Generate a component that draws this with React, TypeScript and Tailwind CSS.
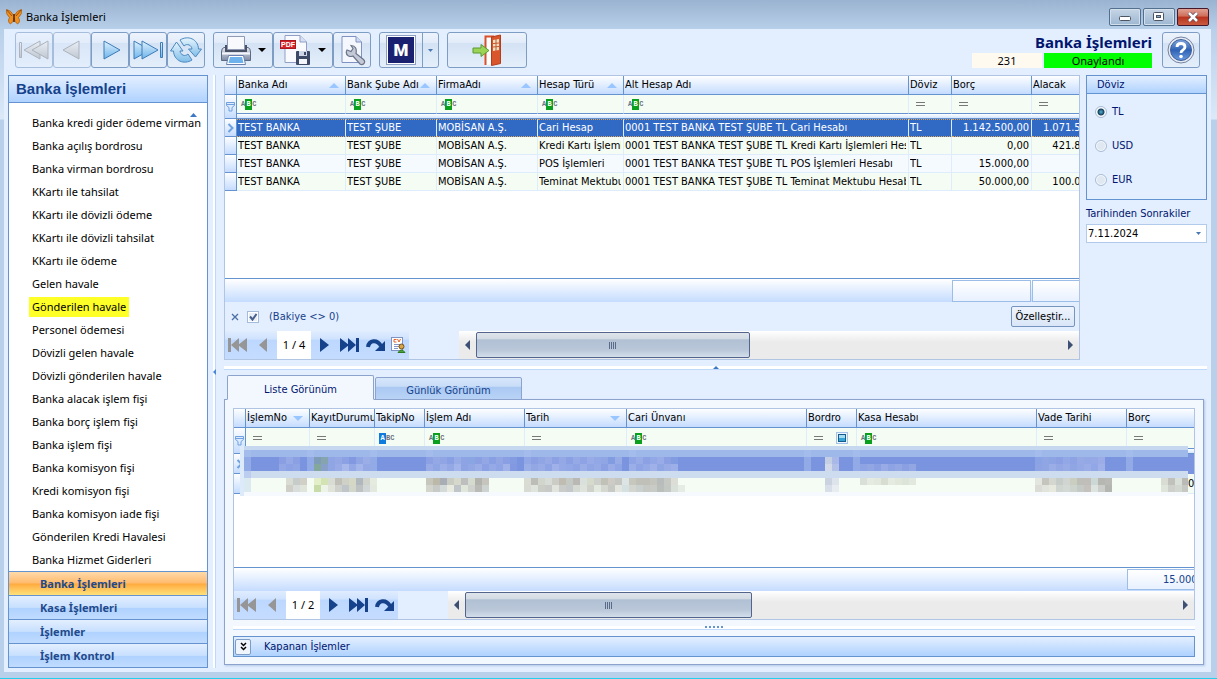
import React, { useState } from 'react';

type Align = 'left' | 'right';
type FilterKind = 'abc' | 'starts' | 'eq' | 'eqbox';

interface Column {
  title: string;
  width: string;
  filter: FilterKind;
  sort?: 'asc' | 'desc';
  align?: Align;
}

const menuItems = [
  'Banka kredi gider ödeme virman',
  'Banka açılış bordrosu',
  'Banka virman bordrosu',
  'KKartı ile tahsilat',
  'KKartı ile dövizli ödeme',
  'KKartı ile dövizli tahsilat',
  'KKartı ile ödeme',
  'Gelen havale',
  'Gönderilen havale',
  'Personel ödemesi',
  'Dövizli gelen havale',
  'Dövizli gönderilen havale',
  'Banka alacak işlem fişi',
  'Banka borç işlem fişi',
  'Banka işlem fişi',
  'Banka komisyon fişi',
  'Kredi komisyon fişi',
  'Banka komisyon iade fişi',
  'Gönderilen Kredi Havalesi',
  'Banka Hizmet Giderleri',
];

const menuGroups = ['Banka İşlemleri', 'Kasa İşlemleri', 'İşlemler', 'İşlem Kontrol'];

const accountColumns: Column[] = [
  { title: 'Banka Adı', width: 'w-[109px]', filter: 'abc', sort: 'asc' },
  { title: 'Bank Şube Adı', width: 'w-[91px]', filter: 'abc', sort: 'asc' },
  { title: 'FirmaAdı', width: 'w-[101px]', filter: 'abc', sort: 'asc' },
  { title: 'Hesap Türü', width: 'w-[86px]', filter: 'abc', sort: 'asc' },
  { title: 'Alt Hesap Adı', width: 'w-[285px]', filter: 'abc' },
  { title: 'Döviz', width: 'w-[43px]', filter: 'eq' },
  { title: 'Borç', width: 'w-[80px]', filter: 'eq', align: 'right' },
  { title: 'Alacak', width: 'w-[80px]', filter: 'eq', align: 'right' },
];

const accountRows = [
  ['TEST BANKA', 'TEST ŞUBE', 'MOBİSAN A.Ş.', 'Cari Hesap', '0001 TEST BANKA TEST ŞUBE TL Cari Hesabı', 'TL', '1.142.500,00', '1.071.500,00'],
  ['TEST BANKA', 'TEST ŞUBE', 'MOBİSAN A.Ş.', 'Kredi Kartı İşlemleri', '0001 TEST BANKA TEST ŞUBE TL Kredi Kartı İşlemleri Hesabı', 'TL', '0,00', '421.800,00'],
  ['TEST BANKA', 'TEST ŞUBE', 'MOBİSAN A.Ş.', 'POS İşlemleri', '0001 TEST BANKA TEST ŞUBE TL POS İşlemleri Hesabı', 'TL', '15.000,00', ''],
  ['TEST BANKA', 'TEST ŞUBE', 'MOBİSAN A.Ş.', 'Teminat Mektubu', '0001 TEST BANKA TEST ŞUBE TL Teminat Mektubu Hesabı', 'TL', '50.000,00', '100.000,00'],
];

const entryColumns: Column[] = [
  { title: 'İşlemNo', width: 'w-[64px]', filter: 'eq', sort: 'desc' },
  { title: 'KayıtDurumu', width: 'w-[65px]', filter: 'eq' },
  { title: 'TakipNo', width: 'w-[50px]', filter: 'starts' },
  { title: 'İşlem Adı', width: 'w-[100px]', filter: 'abc' },
  { title: 'Tarih', width: 'w-[102px]', filter: 'eq', sort: 'desc' },
  { title: 'Cari Ünvanı', width: 'w-[180px]', filter: 'abc' },
  { title: 'Bordro', width: 'w-[50px]', filter: 'eqbox' },
  { title: 'Kasa Hesabı', width: 'w-[180px]', filter: 'abc' },
  { title: 'Vade Tarihi', width: 'w-[90px]', filter: 'eq' },
  { title: 'Borç', width: 'w-[86px]', filter: 'eq', align: 'right' },
];

const entryRows = [
  ['', '', '', '', '', '', '', '', '', ''],
  ['', '', '', '', '', '', '', '', '', '15.000,00'],
];

// Masked tiles of the two entry rows: start tile, then the colours of each line
const maskDark = [
  { at: 5, top: '8a9fe2 95a9e6 8ba0e3', bottom: '93a7e5 8da2e4 90a5e4' },
  { at: 10, top: '7e9bb8 86a4ae 90a6e4 94a8e5 8ba1e3 8298e1 8fa5e4 9bade7', bottom: '83a79b 88a0c8 8fa5e4 98abe6 a8b8eb 94a8e5 a4b5ea 94a8e5' },
  { at: 26, top: '8ca1e3 94a8e5 90a5e4 899fe3 97abe6 8ea3e4 89a6e2 8aa0e3 93a7e5 88a0e3 92a6e4 8a9fe3 829be1', bottom: '98abe6 90a5e4 9cafe8 94a8e5 a3b4ea 8ea3e4 93a7e5 9badE7 8ca1e3 95a9e6 8fa4e4 a1b2e9 8298e1' },
  { at: 40, top: '92a7e5 8ba0e3 90a5e4 97aae6 8ca1e3 93a8e5 8aa0e3 95a9e6 8ea3e4 98abe6 92a7e5 90a5e4 829ce1 97abe6', bottom: '9aaee7 93a7e5 98abe6 8ea3e4 9fb1e8 95a9e6 92a7e5 8ea3e4 9badE7 90a5e4 95a9e6 8ba0e3 99ace7 8fa4e4' },
  { at: 55, top: '8fa4e4 97abe6 8ca1e3 92a7e5 99ace7 8aa0e3 829ce1', bottom: '9aaee7 8fa4e4 95a9e6 9fb1e8 90a5e4 98abe6 9cafe8' },
  { at: 83, top: 'c4cfe4 a9b8e6', bottom: 'd2dae9 b3c0e8' },
  { at: 88, top: '7a94df 7a94df 7a94df 7a94df 7a94df 7a94df 7a94df 7a94df', bottom: '8da3e3 92a6e4 8ba0e3 98abe6 8ea3e4 93a7e5 8ba0e3 92a6e4' },
  { at: 113, top: '8aa3e4 90a5e4 8ca4e4 8aa0e3 92a7e5 8ea3e4 97aae6 93a8e5 95a9e6 9bace6', bottom: '8ea3e4 8fa5e4 9aade7 93a7e5 98abe6 90a5e4 95a9e6 9badE7 92a7e5 9fb1e8' },
];

const maskLight = [
  { at: 6, top: 'd9dcd2 c5ccc9 d0d0c6', bottom: 'cfcfc7 d9dddb e0e5dc' },
  { at: 10, top: 'e2efc9 d4e3b4 d9dcd2 c0bfb8 cfd0c6 d5d8c4 b0b8bd cfd3cb e6ebe0', bottom: 'c8dcaa edf3e6 dfe3da cfd2cc bfc5c8 d3d7c9 bfc2c2 d1d6d6 e4e9df' },
  { at: 26, top: 'c7c6bd bdb9a8 a9adb5 c8ccc3 d5d8cb bcbfbd d5dbcf b3b3ad c5c5bd', bottom: 'd3d5cd c7cac7 d3dad7 e9ebe0 bfc5c8 e0e6da cfd2cd babbb7 ccd3d1' },
  { at: 40, top: 'd8dcd3 bdbdb8 d2d5cc d7dcd6 ccccc6 c1bcb2 c5c9c4 b9b8b4 dae1dc d5dacb cdd0ca c2c1b8 cdcbc4 c4c7c1 dce5e4', bottom: 'd7dbd3 dfe4dd cbcec7 c7cac7 e0e4dc c9ccc8 c4c8c8 d5dad3 dee4dc cfd2cb e4e9df d4d8d1 c7cac4 e3e6df d5e0e1' },
  { at: 55, top: 'c6c7bd c0c0b8 c1c0b8 c4c6bd b8bdbc c6c9c3 dcded6', bottom: 'd2d6cf cad0cd c6c9c4 c9ccc6 bbbfbc c4c8c4 d9dfd9 e5ece3' },
  { at: 83, top: 'cbd2e0 dde4ec', bottom: 'd9dfe9 e7edf1' },
  { at: 88, top: 'd8e0d8 e6ebe2 e3e8de d8ddd1 e6ebe2 e1e7db dce3d9 e3e8de', bottom: 'f5fcf3 f5fcf3 f5fcf3 f5fcf3 f5fcf3 f5fcf3 f5fcf3 f5fcf3' },
  { at: 113, top: 'e3e6df c5c5be d3d7d0 c6ccc8 d1d5d1 c9cec1 bfbfba c1bdb8 cbd8d6 b7b7b2 b9bab5', bottom: 'dadcd5 e0e4dc e7e8de cfd5d1 d3d9d5 cdd4ce c6cac7 c5c2be dde4e0 cbceca b4b6b1' },
  { at: 131, top: 'd9dcd2 c1c1bb d9dfd9 b9b9b6', bottom: 'e0e5dc cdd0cb d2d7d0 c6c8c3' },
];

// Column separators seen through the mask
const maskLines = [9, 18, 26, 40, 55, 80, 87, 113, 126];

const SortMark: React.FC<{ dir: 'asc' | 'desc' }> = ({ dir }) => (
  <svg viewBox="0 0 10 5" className="mr-[6px] h-[5px] w-[10px] shrink-0">
    <path d={dir === 'asc' ? 'M5 0L10 5H0Z' : 'M0 0H10L5 5Z'} fill="#99c6ff" />
  </svg>
);

const FilterIcon: React.FC<{ kind: FilterKind }> = ({ kind }) => {
  if (kind === 'abc') {
    return (
      <span className="flex h-[11px] w-4 items-center text-[7px] leading-none font-bold text-gray-500 font-['Liberation_Mono',monospace]">
        <span>A</span>
        <span className="flex h-[11px] w-[7px] items-center justify-center bg-[#0aa01e] text-white">B</span>
        <span>C</span>
      </span>
    );
  }
  if (kind === 'starts') {
    return (
      <span className="flex h-[11px] w-4 items-center text-[7px] leading-none font-bold text-gray-500 font-['Liberation_Mono',monospace]">
        <span className="flex h-[11px] w-[7px] items-center justify-center bg-[#0f7bdc] text-white">A</span>
        <span>BC</span>
      </span>
    );
  }
  return (
    <span className="flex w-full items-center justify-between pl-[3px]">
      <svg viewBox="0 0 9 4" className="h-1 w-[9px]">
        <path d="M0 .5H9M0 3.5H9" stroke="#787878" />
      </svg>
      {kind === 'eqbox' && (
        <svg viewBox="0 0 12 12" className="mr-2 h-3 w-3">
          <rect x=".5" y=".5" width="11" height="11" fill="#eef5ff" stroke="#a5c3ea" />
          <rect x="2.500" y="2.500" width="7" height="7" fill="#35a5d6" stroke="#175d8c" />
          <rect x="3" y="3" width="6" height="3" fill="#a5dcf2" />
        </svg>
      )}
    </span>
  );
};

const headCell = 'border-r border-b border-[#6593cf] bg-linear-to-b from-[#fdfeff] to-[#c5dcff]';

interface GridProps {
  label: string;
  columns: Column[];
  rows: string[][];
  tableWidth: string;
  filterHeight: string;
  rowHeight: string;
  selectedRow: string;
  selectedCell: string;
}

const DataGrid: React.FC<GridProps> = ({
  label,
  columns,
  rows,
  tableWidth,
  filterHeight,
  rowHeight,
  selectedRow,
  selectedCell,
}) => (
  <table aria-label={label} className={`${tableWidth} table-fixed border-separate border-spacing-0 leading-[14px] whitespace-nowrap`}>
    <colgroup>
      <col className="w-3" />
      {columns.map((c) => (
        <col key={c.title} className={c.width} />
      ))}
    </colgroup>
    <thead>
      <tr className="h-[19px]">
        <th className={`${headCell} p-0`} />
        {columns.map((c) => (
          <th key={c.title} className={`${headCell} p-0 pl-px text-left font-normal`}>
            <span className="flex items-center justify-between overflow-hidden">
              {c.title}
              {c.sort && <SortMark dir={c.sort} />}
            </span>
          </th>
        ))}
      </tr>
    </thead>
    <tbody>
      <tr className={filterHeight}>
        <td rowSpan={2} className={`${headCell} p-0`}>
          <svg viewBox="0 0 9 11" className="ml-px h-[11px] w-[9px]">
            <path d="M.5 1.500H8.500V4.500L6 6.500V10H3V6.500L.5 4.500ZM1 3.500H8" fill="#dcebff" stroke="#6fa0df" />
          </svg>
        </td>
        {columns.map((c) => (
          <td key={c.title} className="border-r border-b border-r-[#dfecfb] border-b-[#6593cf] bg-[#f5fcf3] p-0 pl-1">
            <FilterIcon kind={c.filter} />
          </td>
        ))}
      </tr>
      <tr className="h-[5px]">
        <td colSpan={columns.length} className="border-b border-[#6593cf] bg-linear-to-b from-[#fdfeff] to-[#d5e6ff] p-0" />
      </tr>
      {rows.map((row, r) => (
        <tr key={r} className={`${rowHeight} ${r === 0 ? selectedRow : r % 2 ? 'bg-[#f5fcf3]' : 'bg-[#f5faff]'}`}>
          <td className={`${headCell} p-0`}>
            {r === 0 && (
              <svg viewBox="0 0 8 10" className="ml-[2px] h-[10px] w-2">
                <path d="M1.500 1L5.500 5L1.500 9" fill="none" stroke="#6fa0df" strokeWidth="2" />
              </svg>
            )}
          </td>
          {row.map((text, c) => (
            <td key={c} className={`border-r p-0 pr-[2px] pl-px ${r === 0 ? selectedCell : 'border-b border-[#dfecfb] pt-px'}`}>
              <div className={`overflow-hidden ${columns[c].align === 'right' ? 'text-right' : ''}`}>{text}</div>
            </td>
          ))}
        </tr>
      ))}
    </tbody>
  </table>
);

const RowMask: React.FC = () => (
  <div className="absolute top-[37px] right-[6px] left-[6px] h-[50px] overflow-hidden">
    <svg className="block h-full w-full" shapeRendering="crispEdges">
      <rect width="100%" height="4" fill="#c6d8f0" />
      <rect y="4" width="100%" height="7" fill="#9fb8ea" />
      <rect y="11" width="100%" height="14" fill="#7a94df" />
      <rect y="25" width="100%" height="7" fill="#cedcf0" />
      <rect y="32" width="100%" height="14" fill="#f5fcf3" />
      <rect y="46" width="100%" height="4" fill="#f6fafe" />
      <rect y="0" width="4" height="50" fill="#dceafa" />
      <rect x="4" y="4" width="7" height="28" fill="#a9c0ee" opacity=".5" />
      <rect x="4" y="32" width="7" height="14" fill="#dbe9f0" />
      {maskLines.map((i) => (
        <rect key={i} x={4 + i * 7} y="4" width="7" height="21" fill="#a9c0ee" opacity=".5" />
      ))}
      {[{ tiles: maskDark, y: 11 }, { tiles: maskLight, y: 32 }].map(({ tiles, y }) =>
        tiles.map(({ at, top, bottom }) =>
          [top, bottom].map((line, l) =>
            line.split(' ').map((color, i) => (
              <rect key={`${y}-${at}-${l}-${i}`} x={4 + (at + i) * 7} y={y + l * 7} width="7" height="7" fill={`#${color}`} />
            )),
          ),
        ),
      )}
    </svg>
  </div>
);

const NavButton: React.FC<{ label: string; d: string; color: string }> = ({ label, d, color }) => (
  <button aria-label={label} className="flex h-full w-[26px] items-center justify-center">
    <svg viewBox="0 0 20 14" className="h-[14px] w-5">
      <path d={d} fill={color} />
    </svg>
  </button>
);

const FIRST = 'M0 0H3V14H0ZM11 0V14L3 7ZM19 0V14L10 7Z';
const LAST = 'M16 0H19V14H16ZM8 0V14L16 7ZM0 0V14L9 7Z';

interface NavigatorProps {
  page: string;
  before: string;
  thumb: string;
  withReport?: boolean;
}

const Navigator: React.FC<NavigatorProps> = ({ page, before, thumb, withReport }) => (
  <div className="flex h-7 shrink-0">
    <div className="flex bg-[linear-gradient(to_bottom,#e0ecff_0,#cfe2ff_30%,#bcd7ff_31%,#c5dcff_100%)]">
      <NavButton label="İlk" color="#969696" d={FIRST} />
      <NavButton label="Önceki" color="#969696" d="M13 0V14L5 7Z" />
      <span className="flex w-[34px] items-center justify-center bg-white font-['Noto_Sans',sans-serif]">{page}</span>
      <NavButton label="Sonraki" color="#15428b" d="M6 0V14L15 7Z" />
      <NavButton label="Son" color="#15428b" d={LAST} />
      <button aria-label="Yenile" className="flex w-[26px] items-center justify-center">
        <svg viewBox="0 0 20 14" className="h-[14px] w-5">
          <path d="M2 9C3 2 11 1 15 8" fill="none" stroke="#15428b" strokeWidth="4" />
          <path d="M19 3V13H9Z" fill="#15428b" />
        </svg>
      </button>
      {withReport && (
        <button aria-label="Rapor" className="flex w-5 items-center justify-start pl-[2px]">
          <svg viewBox="0 0 15 16" className="h-4 w-[15px]">
            <rect x=".5" y=".5" width="11" height="13" fill="#fff" stroke="#7c93c4" />
            <path d="M5.500 2.500H3V5H5.500M6.500 2L8 5L9.500 2" stroke="#e2622c" fill="none" />
            <path d="M3 7.500H9M3 9.500H8M3 11.500H7" stroke="#8496c8" />
            <circle cx="10.500" cy="9.500" r="2.500" fill="#d5a54a" stroke="#7a5118" />
            <path d="M7 15.500Q10.500 10.500 14 15.500Z" fill="#4aa53c" stroke="#2c7a22" />
          </svg>
        </button>
      )}
    </div>
    <div className={`${before} flex min-w-0 flex-1 items-center bg-linear-to-b from-white to-[#ebebeb] to-40%`}>
      <button aria-label="Sola kaydır" className="flex w-[17px] shrink-0 justify-center">
        <svg viewBox="0 0 5 10" className="h-[10px] w-[5px]">
          <path d="M5 0V10L0 5Z" fill="#3d4f73" />
        </svg>
      </button>
      <div
        className={`${thumb} flex h-[26px] items-center justify-center rounded-[2px] border border-[#53658c] bg-[linear-gradient(to_bottom,#dfe5eb_0,#d2dae3_25%,#b1c0d3_28%,#b9c7d9_70%,#d3deea_100%)]`}
      >
        <svg viewBox="0 0 8 7" className="h-[7px] w-2">
          <path d="M.5 0V7M2.500 0V7M4.500 0V7M6.500 0V7" stroke="#5b6b87" />
        </svg>
      </div>
      <button aria-label="Sağa kaydır" className="ml-auto flex w-[17px] shrink-0 justify-center">
        <svg viewBox="0 0 5 10" className="h-[10px] w-[5px]">
          <path d="M0 0V10L5 5Z" fill="#3d4f73" />
        </svg>
      </button>
    </div>
  </div>
);

const toolButton =
  'flex h-9 items-center rounded-[3px] border border-[#7e9dc4] bg-[linear-gradient(to_bottom,#edf3fc_0,#e2ecf9_28%,#d3e2f4_30%,#e5effb_100%)]';

const Caret: React.FC = () => (
  <svg viewBox="0 0 8 4" className="h-1 w-2">
    <path d="M0 0H8L4 4Z" fill="#000" />
  </svg>
);

const ToolArrow: React.FC<{ label: string; off?: boolean; children: React.ReactNode }> = ({ label, off, children }) => (
  <button aria-label={label} className={`${toolButton} w-[38px] justify-center ${off ? 'opacity-60' : ''}`}>
    <svg viewBox="0 0 32 22" className="h-[22px] w-8" strokeLinejoin="round">
      <defs>
        <linearGradient id={`arrow-${label}`} x1="0" y1="0" x2="0" y2="1">
          <stop offset="0" stopColor={off ? '#f1f1f1' : '#dff1fd'} />
          <stop offset="1" stopColor={off ? '#a9adb2' : '#6db4ea'} />
        </linearGradient>
      </defs>
      <g fill={`url(#arrow-${label})`} stroke={off ? '#888d93' : '#3e7cb8'}>
        {children}
      </g>
    </svg>
  </button>
);

const Toolbar: React.FC = () => (
  <div className="flex items-start pt-[3px] pb-[7px] pl-[7px]">
    <div className="flex">
      <ToolArrow label="first" off>
        <path d="M1.500 3.500H3.500V18.500H1.500Z" />
        <path d="M22 2V20L6 11Z" />
        <path d="M30 2V20L14 11Z" />
      </ToolArrow>
      <ToolArrow label="previous" off>
        <path d="M23 2V20L7 11Z" />
      </ToolArrow>
      <ToolArrow label="next">
        <path d="M10 2V20L26 11Z" />
      </ToolArrow>
      <ToolArrow label="last">
        <path d="M2 2V20L18 11Z" />
        <path d="M10 2V20L26 11Z" />
        <path d="M28.500 3.500H30.500V18.500H28.500Z" />
      </ToolArrow>
      <button aria-label="Yenile" className={`${toolButton} w-[38px] justify-center`}>
        <svg viewBox="0 0 32 28" className="h-7 w-8">
          <defs>
            <linearGradient id="refresh" x1="0" y1="0" x2="0" y2="1">
              <stop offset="0" stopColor="#e6f5fd" />
              <stop offset="1" stopColor="#7fbde8" />
            </linearGradient>
          </defs>
          <g fill="url(#refresh)" stroke="#4c88bf" strokeLinejoin="round">
            <path d="M10 4C18 -1 28 3 28.500 13H31.500L25.500 21L18.500 13H22C21.500 9 17 7 14 10Z" />
            <path d="M22 24C14 29 4 25 3.500 15H.5L6.500 6L13 15H10C10.500 19 15 21 18 18Z" />
          </g>
        </svg>
      </button>
    </div>

    <div className="ml-2 flex">
      <button aria-label="Yazdır" className={`${toolButton} w-[60px] justify-between pr-[6px] pl-[6px]`}>
        <svg viewBox="0 0 32 32" className="h-8 w-8">
          <defs>
            <linearGradient id="printer" x1="0" y1="0" x2="0" y2="1">
              <stop offset="0" stopColor="#e6e9f1" />
              <stop offset="1" stopColor="#7d89a3" />
            </linearGradient>
          </defs>
          <path d="M4 13.500H28Q30.500 14 30.500 18V26.500H1.500V18Q1.500 14 4 13.500Z" fill="url(#printer)" stroke="#5d6a86" />
          <path d="M5 11H27V18H5Z" fill="#4a5268" />
          <path d="M7.500 2.500H24.500V15.500H7.500Z" fill="#f7f9fd" stroke="#8f9bb5" />
          <path d="M2 19.500H30" stroke="#f4f6fb" strokeWidth="2" />
          <path d="M8.500 21.500H23.500L25.500 30.500H6.500Z" fill="#fff" stroke="#6a7fae" />
          <path d="M10 23H22L23.500 29H8.500Z" fill="#6db2ec" />
        </svg>
        <Caret />
      </button>
      <button aria-label="PDF kaydet" className={`${toolButton} w-[60px] justify-between pr-[6px] pl-[6px]`}>
        <svg viewBox="0 0 32 32" className="h-8 w-8">
          <path d="M5 1.500H20L26.500 8V28.500H5Z" fill="#f8fafe" stroke="#8f9fc6" />
          <path d="M20 1.500V8H26.500" fill="#d5e0f5" stroke="#8f9fc6" />
          <rect x=".5" y="6.500" width="15" height="8" fill="#d3252b" stroke="#a8171d" />
          <text x="8" y="13" textAnchor="middle" fontSize="7" fontWeight="700" fill="#fff" fontFamily="Liberation Sans">PDF</text>
          <rect x="16" y="17" width="14" height="14" rx="1" fill="#3c4a68" />
          <rect x="19" y="17" width="8" height="5" fill="#cdd6e6" />
          <rect x="19" y="25" width="8" height="5" fill="#f3f6fb" />
          <rect x="24" y="18" width="2" height="3" fill="#3c4a68" />
        </svg>
        <Caret />
      </button>
      <button aria-label="Tasarım" className={`${toolButton} w-[38px] justify-center`}>
        <svg viewBox="0 0 30 32" className="h-8 w-[30px]">
          <path d="M5 2.500H19L24.500 8V28.500H5Z" fill="#f4f7fe" stroke="#7f92c4" />
          <path d="M19 2.500V8H24.500" fill="#cfdbf3" stroke="#7f92c4" />
          <path
            d="M14 11.500L16 14.500L14 17.500L10 16Q8 20 11.500 22Q14 23 16 22L23 30Q25 31.500 27 29.500Q28.500 27.500 26.500 25.500L19 19.500Q20.500 12 14 11.500Z"
            fill="#c3c9d6"
            stroke="#6b7489"
            strokeWidth="1.200"
          />
        </svg>
      </button>
    </div>

    <div className={`${toolButton} ml-2 w-[60px]`}>
      <button aria-label="M" className="flex h-full flex-1 items-center justify-center">
        <span className="flex h-[30px] w-[30px] items-center justify-center border border-[#8d9ec4] bg-white">
          <span className="flex h-[26px] w-[26px] items-center justify-center bg-[#1a2170] text-[17px] leading-none font-black text-white font-['Roboto',sans-serif]">
            M
          </span>
        </span>
      </button>
      <button aria-label="M seçenekleri" className="flex h-full w-4 items-center justify-center border-l border-[#7e9dc4]">
        <svg viewBox="0 0 5 3" className="h-[3px] w-[5px]">
          <path d="M0 0H5L2.500 3Z" fill="#4a78b5" />
        </svg>
      </button>
    </div>

    <button aria-label="Çıkış" className={`${toolButton} ml-2 w-20 justify-center`}>
      <svg viewBox="0 0 30 32" className="h-8 w-[30px]">
        <path d="M13.500 31V2.500H21V30" fill="#fff" stroke="#d9502a" strokeWidth="2" />
        <path d="M19.500 3L28.500 1V29.500L19.500 31.500Z" fill="#d9562d" stroke="#b33d1a" />
        <path d="M21 6L27 5V16L21 17Z" fill="#f0e3c4" />
        <path d="M24 5V17M21 9.500L27 9M21 13L27 12.500" stroke="#c1592f" />
        <path d="M1 14H9V10.500L17 16.500L9 22.500V19H1Z" fill="#9bd356" stroke="#5b9a31" />
      </svg>
    </button>

    <div className="ml-auto flex flex-col items-end leading-none font-['Noto_Sans',sans-serif]">
      <h1 className="flex h-[21px] items-center text-[15px] font-bold text-[#00156e]">Banka İşlemleri</h1>
      <div className="flex gap-[2px]">
        <span className="flex h-[15px] w-[70px] items-center justify-center bg-[#fffaf0]">231</span>
        <span className="flex h-[15px] w-[108px] items-center justify-center bg-[#00ff00]">Onaylandı</span>
      </div>
    </div>
    <button aria-label="Yardım" className={`${toolButton} mr-[7px] ml-[10px] w-[38px] justify-center`}>
      <svg viewBox="0 0 30 30" className="h-[30px] w-[30px]">
        <defs>
          <linearGradient id="help" x1="0" y1="0" x2="0" y2="1">
            <stop offset="0" stopColor="#86a9de" />
            <stop offset=".5" stopColor="#2f62b5" />
            <stop offset="1" stopColor="#6a9be0" />
          </linearGradient>
        </defs>
        <circle cx="15" cy="15" r="13" fill="#e6ebf3" stroke="#7583a0" />
        <circle cx="15" cy="15" r="10.500" fill="url(#help)" stroke="#3d5f9c" />
        <path d="M11 12Q11 8.500 15 8.500Q19 8.500 19 12Q19 13.500 17 15Q15 16 15 18" fill="none" stroke="#fff" strokeWidth="2.800" />
        <circle cx="15" cy="21.500" r="1.800" fill="#fff" />
      </svg>
    </button>
  </div>
);

const windowButton =
  'flex h-[18px] w-8 items-center justify-center rounded-[2px] border border-[#53718f] bg-linear-to-b from-[#c6d5e5] to-[#9db7d2] shadow-[inset_0_0_0_1px_#d3e0ec]';

const TitleBar: React.FC = () => (
  <header className="flex h-[29px] items-center gap-1 pt-[5px] pl-[6px]">
    <svg viewBox="0 0 16 16" className="h-4 w-4">
      <path
        d="M8 7Q5 1 .5 .5Q-.5 5 3.500 8.500Q1 13 4.500 15Q7.500 13 8 9Q8.500 13 11.500 15Q15 13 12.500 8.500Q16.500 5 15.500 .5Q11 1 8 7Z"
        fill="#f2901c"
        stroke="#a3550f"
        strokeWidth=".7"
      />
      <path d="M8 5V13" stroke="#4a260a" strokeWidth="1.500" />
      <path d="M.8 1L6 7M15.200 1L10 7" stroke="#6b3308" strokeWidth=".7" />
    </svg>
    <span className="text-black font-['Noto_Sans',sans-serif]">Banka İşlemleri</span>
    <div className="mr-2 mb-px ml-auto flex gap-[2px]">
      <button aria-label="Simge durumuna küçült" className={windowButton}>
        <svg viewBox="0 0 12 6" className="mt-1 h-[6px] w-3">
          <rect x=".5" y=".5" width="11" height="4" rx="1" fill="#fff" stroke="#4b5563" />
        </svg>
      </button>
      <button aria-label="Ekranı kapla" className={windowButton}>
        <svg viewBox="0 0 12 10" className="h-[10px] w-3">
          <rect x=".5" y=".5" width="10" height="8" rx="1" fill="#fff" stroke="#4b5563" />
          <rect x="3.500" y="3.500" width="4" height="2" fill="#8ea8c3" stroke="#4b5563" />
        </svg>
      </button>
      <button
        aria-label="Kapat"
        className="flex h-[18px] w-8 items-center justify-center rounded-[2px] border border-[#46182a] bg-[linear-gradient(to_bottom,#e0a193_0,#cf6d59_45%,#b8321c_50%,#c95c42_100%)]"
      >
        <svg viewBox="0 0 12 10" className="h-[10px] w-3">
          <path d="M2 1L10 9M10 1L2 9" stroke="#5c4a54" strokeWidth="4" />
          <path d="M2 1L10 9M10 1L2 9" stroke="#fff" strokeWidth="2.500" />
        </svg>
      </button>
    </div>
  </header>
);

const Sidebar: React.FC = () => {
  const [activeGroup, setActiveGroup] = useState('Banka İşlemleri');

  return (
    <nav className="flex w-[200px] shrink-0 flex-col border border-[#6593cf] bg-white font-['Noto_Sans',sans-serif]">
      <h2 className="flex h-[27px] items-center border-b border-[#6593cf] bg-linear-to-b from-[#e3efff] to-[#afd2ff] pl-[7px] text-[15px] font-bold text-[#15428b] font-['Liberation_Sans',sans-serif]">
        Banka İşlemleri
      </h2>
      <ul className="relative flex-1 pt-2">
        <li className="absolute top-[10px] right-[10px]">
          <svg viewBox="0 0 7 4" className="h-1 w-[7px]">
            <path d="M3.500 0L7 4H0Z" fill="#3d78c5" />
          </svg>
        </li>
        {menuItems.map((item) => (
          <li key={item} className="flex h-[23px] items-center pl-5 leading-none whitespace-nowrap">
            <a href="#" className={`flex h-5 items-center px-[3px] text-black ${item === 'Gönderilen havale' ? 'bg-[#ffff28]' : ''}`}>
              {item}
            </a>
          </li>
        ))}
      </ul>
      {menuGroups.map((group) => (
        <button
          key={group}
          onClick={() => setActiveGroup(group)}
          className={`h-6 border-t border-[#6593cf] pl-[31px] text-left font-bold text-[#1f4a8c] ${
            group === activeGroup
              ? 'bg-[linear-gradient(to_bottom,#ffd9aa_0,#ffbb6d_48%,#ffab3f_52%,#fee17a_100%)]'
              : 'bg-[linear-gradient(to_bottom,#e3efff_0,#c7dfff_50%,#afd2ff_52%,#c0dbff_100%)]'
          }`}
        >
          {group}
        </button>
      ))}
    </nav>
  );
};

const CurrencyPanel: React.FC = () => {
  const [currency, setCurrency] = useState('TL');
  const [date, setDate] = useState('7.11.2024');

  return (
    <div className="w-[121px] shrink-0 text-[#00156e]">
      <fieldset className="border border-[#6593cf]">
        <legend className="float-left flex h-[18px] w-full items-center border-b border-[#6593cf] bg-linear-to-b from-[#e3efff] to-[#afd2ff] pt-px pl-[10px]">
          Döviz
        </legend>
        <div className="clear-both flex flex-col gap-5 pt-[11px] pb-3 pl-2">
          {['TL', 'USD', 'EUR'].map((code) => (
            <label key={code} className="flex h-[14px] items-center gap-[5px]">
              <input
                type="radio"
                name="currency"
                checked={currency === code}
                onChange={() => setCurrency(code)}
                className="h-3 w-3 appearance-none rounded-full border border-[#a9bdd6] bg-[#e0e8f2] shadow-[inset_0_0_0_1px_#f8fbff] checked:bg-[radial-gradient(circle,#4fb6d2_0,#173f5c_3px,#f2f6fb_4px)]"
              />
              {code}
            </label>
          ))}
        </div>
      </fieldset>
      <label htmlFor="since" className="mt-[7px] flex h-[14px] items-center whitespace-nowrap">
        Tarihinden Sonrakiler
      </label>
      <div className="mt-[3px] flex h-[19px] border border-[#b3cbea] bg-white">
        <input id="since" value={date} onChange={(e) => setDate(e.target.value)} className="min-w-0 flex-1 pl-px text-black outline-none" />
        <button aria-label="Takvim" className="flex w-4 items-center justify-center">
          <svg viewBox="0 0 5 3" className="h-[3px] w-[5px]">
            <path d="M0 0H5L2.500 3Z" fill="#4a78b5" />
          </svg>
        </button>
      </div>
    </div>
  );
};

const AccountsGrid: React.FC = () => {
  const [filterOn, setFilterOn] = useState(true);

  return (
    <section className="flex min-w-0 flex-1 flex-col border border-[#b0c5e3]">
      <div className="min-h-[202px] flex-1 overflow-hidden bg-white">
        <DataGrid
          label="Hesaplar"
          columns={accountColumns}
          rows={accountRows}
          tableWidth="w-[887px]"
          filterHeight="h-[19px]"
          rowHeight="h-[18px]"
          selectedRow="bg-[#316ac5] text-white"
          selectedCell="border-y border-y-[#d9a35b] border-r-[#dfecfb] [border-style:dotted_solid]"
        />
      </div>
      <div className="flex h-6 overflow-hidden border-t border-[#6593cf] bg-linear-to-b from-white to-[#c5dcff] py-px">
        <div className="ml-auto h-[22px] w-[79px] border border-[#9dbde9] bg-linear-to-b from-white to-[#e8f1ff]" />
        <div className="ml-px h-[22px] w-[47px] border border-r-0 border-[#9dbde9] bg-linear-to-b from-white to-[#e8f1ff]" />
      </div>
      <div className="flex h-[29px] items-center pr-1 pl-[6px] text-[#15428b]">
        <button aria-label="Filtreyi kaldır">
          <svg viewBox="0 0 8 8" className="h-2 w-2">
            <path d="M1 1L7 7M7 1L1 7" stroke="#4a6ea5" strokeWidth="1.300" />
          </svg>
        </button>
        <label className="relative ml-2 flex items-center gap-[10px]">
          <input
            type="checkbox"
            checked={filterOn}
            onChange={(e) => setFilterOn(e.target.checked)}
            className="h-3 w-3 appearance-none border border-[#a3bbdc] bg-[#e9eff6] shadow-[inset_0_0_0_1px_#fff]"
          />
          {filterOn && (
            <svg viewBox="0 0 12 12" className="pointer-events-none absolute left-0 h-3 w-3">
              <path d="M3 5.500L5.500 8.500L9.500 3" fill="none" stroke="#47618c" strokeWidth="2" />
            </svg>
          )}
          (Bakiye &lt;&gt; 0)
        </label>
        <button className="ml-auto h-[21px] w-16 rounded-[2px] border border-[#7594be] bg-linear-to-b from-[#eef4fd] to-[#d9e6f7] text-black">
          Özelleştir...
        </button>
      </div>
      <Navigator page="1 / 4" before="ml-[50px]" thumb="w-[274px]" withReport />
    </section>
  );
};

const EntriesPanel: React.FC = () => {
  const [tab, setTab] = useState('Liste Görünüm');

  return (
    <section className="mr-[3px] flex flex-1 flex-col pt-[5px]">
      <div role="tablist" className="-mb-px flex h-[25px] items-end gap-px pl-[3px]">
        {['Liste Görünüm', 'Günlük Görünüm'].map((name) => (
          <button
            key={name}
            role="tab"
            aria-selected={name === tab}
            onClick={() => setTab(name)}
            className={`relative w-[147px] rounded-t-[2px] border border-[#8ca3cd] pt-1 ${
              name === tab
                ? 'h-[25px] border-b-[#f3f8ff] bg-[#f3f8ff] text-[#00156e]'
                : 'h-[23px] bg-[linear-gradient(to_bottom,#d6e6fb_0,#c9ddf8_40%,#a9c8f2_42%,#b9d3f6_100%)] text-[#15428b]'
            }`}
          >
            {name}
          </button>
        ))}
      </div>
      <div className="flex flex-1 flex-col border border-[#8ca3cd] bg-[#f3f8ff] p-2 pb-[7px] shadow-[1px_1px_2px_#b3c8e6]">
        <div className="flex flex-1 flex-col border border-[#b0c5e3] bg-[#e3eeff]">
          <div className="relative min-h-[158px] flex-1 overflow-hidden bg-white">
            <div className="w-0">
              <DataGrid
                label="İşlemler"
                columns={entryColumns}
                rows={entryRows}
                tableWidth="w-[979px]"
                filterHeight="h-[21px]"
                rowHeight="h-5"
                selectedRow="bg-[#7a94df]"
                selectedCell="border-b border-[#7a94df]"
              />
            </div>
            <RowMask />
          </div>
          <div className="flex h-6 overflow-hidden border-t border-[#6593cf] bg-linear-to-b from-white to-[#c5dcff] py-px">
            <div className="ml-auto h-[21px] w-[67px] overflow-hidden border border-r-0 border-[#9dbde9] bg-linear-to-b from-white to-[#e8f1ff] pl-[35px] leading-[19px] text-[#15428b]">
              15.000,00
            </div>
          </div>
          <Navigator page="1 / 2" before="ml-[50px]" thumb="w-[287px]" />
        </div>
        <div className="my-[6px] flex h-1 justify-center border-b border-[#c0d9fb] bg-white">
          <svg viewBox="0 0 18 2" className="h-[2px] w-[18px]">
            <path d="M0 1H18" stroke="#6593cf" strokeWidth="2" strokeDasharray="2 2" />
          </svg>
        </div>
        <div className="flex h-[21px] items-center border border-[#6593cf] bg-linear-to-b from-[#e3efff] to-[#afd2ff] pl-px text-[#00156e]">
          <button aria-label="Genişlet" className="mr-[13px] flex h-4 w-4 items-center justify-center rounded-[2px] border border-[#7e9dc4] bg-[#eff5fd]">
            <svg viewBox="0 0 7 9" className="h-[9px] w-[7px]">
              <path d="M1 1L3.500 3.500L6 1M1 5L3.500 7.500L6 5" fill="none" stroke="#000" strokeWidth="1.500" />
            </svg>
          </button>
          Kapanan İşlemler
        </div>
      </div>
    </section>
  );
};

const App: React.FC = () => {
  return (
    <div className="flex min-h-screen flex-col overflow-hidden border-b border-[#23d0ee] bg-[linear-gradient(to_bottom,#9ab3d0_0,#b9d0ea_30px,#dbe9f8_119px,#b9d0ea_120px)] text-[11px] leading-[14px] text-black font-['DejaVu_Sans_Condensed','Noto_Sans',sans-serif]">
      <TitleBar />
      <div className="mr-[6px] mb-[6px] ml-1 flex flex-1 flex-col bg-[#e3eeff] px-1 pb-1">
        <Toolbar />
        <main className="flex flex-1">
          <Sidebar />
          <div className="mr-2 ml-[5px] flex w-[3px] shrink-0 flex-col justify-center border-r border-[#bcd8fb] bg-white">
            <svg viewBox="0 0 3 6" className="h-[6px] w-[3px]">
              <path d="M3 0V6L0 3Z" fill="#4a86d8" />
            </svg>
          </div>
          <div className="flex min-w-0 flex-1 flex-col pb-[3px]">
            <div className="flex gap-[6px]">
              <AccountsGrid />
              <CurrencyPanel />
            </div>
            <div className="mt-[6px] flex h-1 justify-center border-b border-[#c0d9fb] bg-white">
              <svg viewBox="0 0 6 3" className="h-[3px] w-[6px]">
                <path d="M3 0L6 3H0Z" fill="#3d78c5" />
              </svg>
            </div>
            <EntriesPanel />
          </div>
        </main>
      </div>
    </div>
  );
};

export default App;
